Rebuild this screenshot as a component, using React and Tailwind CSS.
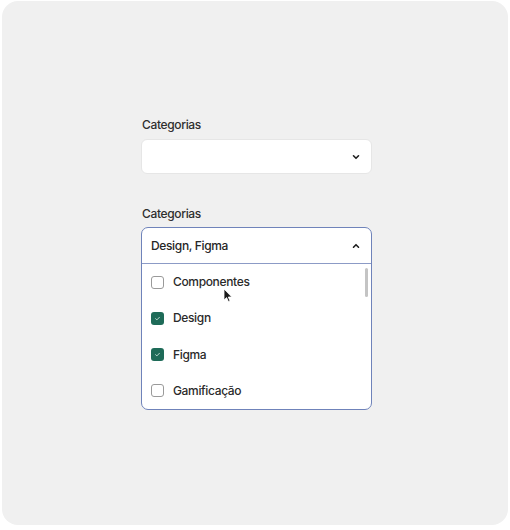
import React, { useState } from 'react'

const options = [
  { id: 'componentes', label: 'Componentes' },
  { id: 'design', label: 'Design' },
  { id: 'figma', label: 'Figma' },
  { id: 'gamificacao', label: 'Gamificação' }
]

function Chevron({ up }) {
  return (
    <svg width="10" height="10" viewBox="0 0 10 10" className={up ? 'rotate-180' : ''}>
      <path d="M2.5 3.8 L5 6.3 L7.5 3.8" fill="none" stroke="#1f1f1f" strokeWidth="1.6" strokeLinecap="round" strokeLinejoin="round" />
    </svg>
  )
}

function Checkbox({ checked }) {
  if (checked) {
    return (
      <span className="w-[13px] h-[13px] rounded-[3px] bg-[#1e6b58] flex items-center justify-center">
        <svg width="7" height="7" viewBox="0 0 8 8">
          <path d="M1.8 4.2 L3.3 5.6 L6.2 2.6" fill="none" stroke="#cfe6de" strokeWidth="1" strokeLinecap="round" strokeLinejoin="round" />
        </svg>
      </span>
    )
  }
  return <span className="w-[13px] h-[13px] rounded-[3px] border border-[#9a9a9a] bg-white" />
}

function App() {
  const [selected, setSelected] = useState(['design', 'figma'])

  const toggle = id =>
    setSelected(s => (s.includes(id) ? s.filter(x => x !== id) : [...s, id]))

  const value = options.filter(o => selected.includes(o.id)).map(o => o.label).join(', ')

  return (
    <div className="w-[510px] h-[530px] bg-white pt-[1px] px-[2px] font-['Inter',sans-serif] tracking-[-0.35px]">
      <div className="relative h-[524px] rounded-[16px] bg-[#f0f0f0] pl-[139px] pt-[116px]">
        {/* Closed select */}
        <div className="w-[231px]">
          <p className="text-[12px] leading-4 font-medium text-[#2e2e2e] pl-[1px]">Categorias</p>
          <button className="mt-[6px] w-full h-[35px] rounded-[6px] bg-white border border-[#e6e6e6] flex items-center justify-end pr-[10px]">
            <Chevron />
          </button>
        </div>

        {/* Open select */}
        <div className="w-[231px] mt-[32px]">
          <p className="text-[12px] leading-4 font-medium text-[#2e2e2e] pl-[1px]">Categorias</p>
          <div className="mt-[5px] rounded-[7px] bg-white border border-[#6f83ba] overflow-hidden">
            <div className="h-[36px] flex items-center justify-between pl-[9px] pr-[10px] border-b border-[#8c9bc6]">
              <span className="text-[12px] font-medium text-[#262626]">{value}</span>
              <Chevron up />
            </div>
            <div className="relative">
              <div className="absolute right-[3px] top-[4px] w-[3px] h-[29px] rounded-full bg-[#c4c4c4]" />
              {options.map(o => (
                <div
                  key={o.id}
                  onClick={() => toggle(o.id)}
                  className="h-[36.25px] flex items-center gap-[9px] pl-[9px] cursor-pointer"
                >
                  <Checkbox checked={selected.includes(o.id)} />
                  <span className="text-[12px] font-medium text-[#2a2a2a]">{o.label}</span>
                </div>
              ))}
            </div>
          </div>
        </div>

        {/* Mouse pointer */}
        <svg className="absolute left-[221px] top-[287px]" width="11" height="15" viewBox="0 0 11 15">
          <path d="M1 1 L1 12 L3.6 9.6 L5.4 13.6 L7 12.9 L5.3 9 L8.8 9 Z" fill="#1a1a1a" stroke="#fff" strokeWidth="0.8" strokeLinejoin="round" />
        </svg>
      </div>
    </div>
  )
}

export default App
